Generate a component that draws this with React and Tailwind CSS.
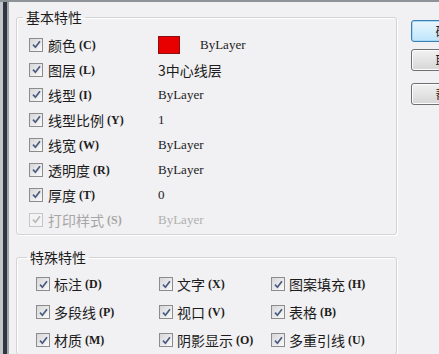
const Check = ({ disabled }) => (
  <span
    className={
      disabled
        ? 'flex h-[14px] w-[14px] shrink-0 items-center justify-center border border-[#c6c6c6] bg-[#f3f3f3]'
        : 'flex h-[14px] w-[14px] shrink-0 items-center justify-center border border-[#8c8c8c] bg-gradient-to-br from-[#d6d6d8] to-[#fbfbfb]'
    }
  >
    <svg viewBox="0 0 12 12" className="h-[11px] w-[11px]">
      <path
        d="M2.2 6.2 L4.8 9 L9.8 2.4"
        fill="none"
        stroke={disabled ? '#b8b8b8' : '#4a5c80'}
        strokeWidth="1.9"
      />
    </svg>
  </span>
)

// name in CJK, access key in the serif face like the dialog
const Label = ({ text, k, disabled }) => (
  <span className={disabled ? 'flex items-center gap-[3px] text-[#a6a6a6]' : 'flex items-center gap-[3px] text-[#1c1c1c]'}>
    <span className="text-[14px] leading-none font-['Noto_Sans_CJK_SC',sans-serif]">{text}</span>
    <span className="text-[12px] leading-none font-bold font-['Liberation_Serif',serif]">({k})</span>
  </span>
)

const basic = [
  { text: '颜色', k: 'C', value: 'color' },
  { text: '图层', k: 'L', value: '3中心线层', cjk: true },
  { text: '线型', k: 'I', value: 'ByLayer' },
  { text: '线型比例', k: 'Y', value: '1' },
  { text: '线宽', k: 'W', value: 'ByLayer' },
  { text: '透明度', k: 'R', value: 'ByLayer' },
  { text: '厚度', k: 'T', value: '0' },
  { text: '打印样式', k: 'S', value: 'ByLayer', disabled: true },
]

const special = [
  ['标注', 'D'], ['文字', 'X'], ['图案填充', 'H'],
  ['多段线', 'P'], ['视口', 'V'], ['表格', 'B'],
  ['材质', 'M'], ['阴影显示', 'O'], ['多重引线', 'U'],
]

const Button = ({ children, focused }) => (
  <div
    className={
      focused
        ? 'flex h-[22px] w-[75px] items-center justify-center rounded-[3px] border border-[#3c7fb1] bg-gradient-to-b from-[#eaf6fd] to-[#bee6fd] text-[13px] text-[#1c1c1c] shadow-[inset_0_0_0_1px_#a7d9f5]'
        : 'flex h-[22px] w-[75px] items-center justify-center rounded-[3px] border border-[#707070] bg-gradient-to-b from-[#f2f2f2] to-[#d6d6d6] text-[13px] text-[#1c1c1c] shadow-[inset_0_0_0_1px_#fcfcfc]'
    }
  >
    {children}
  </div>
)

export default function App() {
  return (
    <div className="flex h-[354px] w-[439px] overflow-hidden border-t-2 border-[#8e939a] bg-[#f1f0f2] font-['Liberation_Serif','Noto_Sans_CJK_SC',serif]">
      <div className="flex shrink-0">
        <div className="w-[3px] bg-[#c3c6ca]" />
        <div className="w-[4px] bg-[#2f3640]" />
        <div className="w-[2px] bg-[#a2a7ad]" />
      </div>

      <div className="flex w-[381px] shrink-0 flex-col ml-[7px] mt-[6px]">
        <fieldset className="rounded-[3px] border border-[#d3d3d5] pl-[12px] pt-[6px] pb-[2px] shadow-[inset_1px_1px_0_#ffffff,1px_1px_0_#ffffff]">
          <legend className="-ml-[6px] px-[3px] text-[14px] leading-[18px] text-[#1c1c1c] font-['Noto_Sans_CJK_SC',sans-serif]">基本特性</legend>
          {basic.map((r) => (
            <div key={r.k} className="flex h-[25px] items-center">
              <Check disabled={r.disabled} />
              <div className="ml-[5px] w-[110px]">
                <Label text={r.text} k={r.k} disabled={r.disabled} />
              </div>
              {r.value === 'color' ? (
                <div className="flex items-center">
                  <span className="h-[18px] w-[22px] border border-[#8a1010] bg-[#e80000]" />
                  <span className="ml-[20px] text-[13px] text-[#1c1c1c]">ByLayer</span>
                </div>
              ) : r.cjk ? (
                <span className="text-[14px] leading-none text-[#1c1c1c] font-['Noto_Sans_CJK_SC',sans-serif]">{r.value}</span>
              ) : (
                <span className={r.disabled ? 'text-[13px] text-[#b0b0b0]' : 'text-[13px] text-[#1c1c1c]'}>{r.value}</span>
              )}
            </div>
          ))}
        </fieldset>

        <fieldset className="mt-[13px] rounded-[3px] border border-[#d3d3d5] pl-[19px] pt-[4px] shadow-[inset_1px_1px_0_#ffffff,1px_1px_0_#ffffff]">
          <legend className="ml-[-9px] px-[3px] text-[14px] leading-[18px] text-[#1c1c1c] font-['Noto_Sans_CJK_SC',sans-serif]">特殊特性</legend>
          <div className="grid grid-cols-[123px_112px_1fr]">
            {special.map(([t, k]) => (
              <div key={k} className="flex h-[28px] items-center gap-[4px]">
                <Check />
                <Label text={t} k={k} />
              </div>
            ))}
          </div>
        </fieldset>
      </div>

      <div className="ml-[14px] mt-[18px] flex shrink-0 flex-col font-['Noto_Sans_CJK_SC',sans-serif]">
        <Button focused>确定</Button>
        <div className="mt-[7px]">
          <Button>取消</Button>
        </div>
        <div className="mt-[12px]">
          <Button>帮助</Button>
        </div>
      </div>
    </div>
  )
}
